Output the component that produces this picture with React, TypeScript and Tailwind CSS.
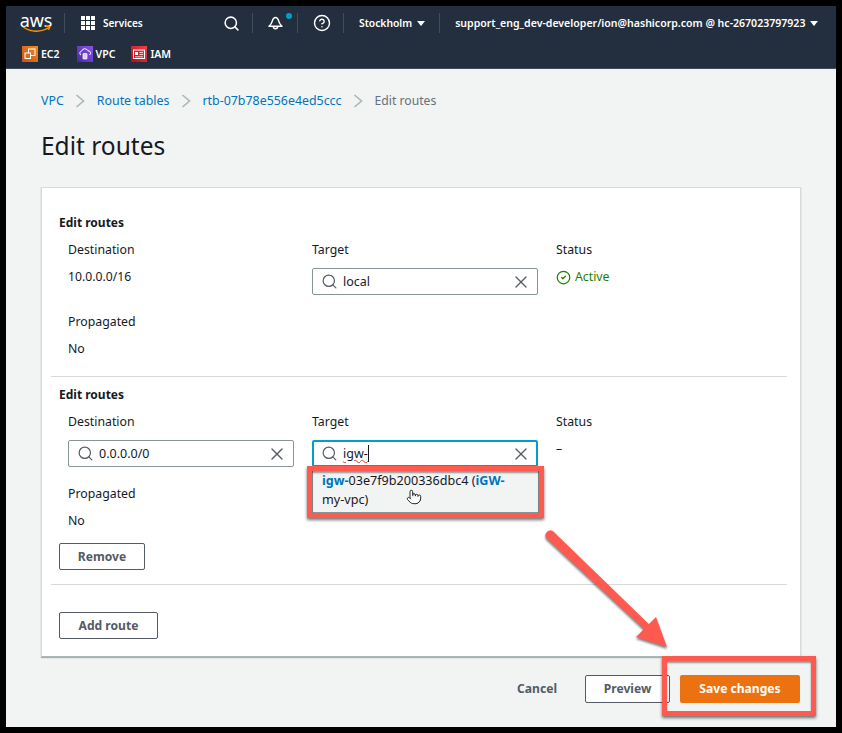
import { CircleCheck, CircleHelp, Pointer, Search, X } from 'lucide-react';

function Caret() {
    return <span className="inline-block w-0 h-0 border-l-[4px] border-r-[4px] border-t-[5px] border-l-transparent border-r-transparent border-t-white" />;
}

function NavDivider() {
    return <span className="block w-px h-[20px] bg-[#414d5c]" />;
}

function Ec2Icon() {
    return (
        <svg width="16" height="16" viewBox="0 0 16 16" className="shrink-0">
            <defs>
                <linearGradient id="ec2" x1="0" y1="1" x2="1" y2="0">
                    <stop offset="0" stopColor="#c8511b" />
                    <stop offset="1" stopColor="#f08a1d" />
                </linearGradient>
            </defs>
            <rect width="16" height="16" fill="url(#ec2)" />
            <rect x="6.5" y="3" width="6.5" height="6.5" fill="none" stroke="#fff" strokeWidth="1" />
            <rect x="3" y="7" width="5.5" height="5.5" fill="#dc6b18" stroke="#fff" strokeWidth="1" />
        </svg>
    );
}

function VpcIcon() {
    return (
        <svg width="16" height="16" viewBox="0 0 16 16" className="shrink-0">
            <defs>
                <linearGradient id="vpc" x1="0" y1="1" x2="1" y2="0">
                    <stop offset="0" stopColor="#4d27a8" />
                    <stop offset="1" stopColor="#8a55e8" />
                </linearGradient>
            </defs>
            <rect width="16" height="16" fill="url(#vpc)" />
            <path d="M4 9a2 2 0 0 1 .5-3.8A3.5 3.5 0 0 1 11 4.8 2.3 2.3 0 0 1 12.5 9" fill="none" stroke="#fff" strokeWidth="1" />
            <rect x="6" y="7.5" width="4" height="5.5" rx="0.5" fill="#d9cdf5" stroke="#fff" strokeWidth="0.7" />
        </svg>
    );
}

function IamIcon() {
    return (
        <svg width="16" height="16" viewBox="0 0 16 16" className="shrink-0">
            <defs>
                <linearGradient id="iam" x1="0" y1="1" x2="1" y2="0">
                    <stop offset="0" stopColor="#bd0816" />
                    <stop offset="1" stopColor="#f0404a" />
                </linearGradient>
            </defs>
            <rect width="16" height="16" fill="url(#iam)" />
            <rect x="2.5" y="4" width="11" height="8.5" fill="none" stroke="#fff" strokeWidth="1" />
            <rect x="4" y="6" width="3" height="3" fill="#fff" />
            <path d="M8.5 6.5h3.5M8.5 8.5h3.5M4 10.8h8" stroke="#fff" strokeWidth="0.8" />
        </svg>
    );
}

function Crumb({ children }: { children: string }) {
    return <a className="text-[#0073bb]">{children}</a>;
}

function CrumbSep() {
    return (
        <svg width="10" height="14" viewBox="0 0 10 14" className="mx-[11.5px] shrink-0">
            <path d="M1.5 1l7 6-7 6" fill="none" stroke="#aab7b8" strokeWidth="1.6" />
        </svg>
    );
}

function TextInput({ value, focused }: { value: React.ReactNode; focused?: boolean }) {
    return (
        <div className={'w-[226px] h-[27px] flex items-center bg-white rounded-[2px] ' + (focused ? 'border-2 border-[#00a1c9] pl-[7px] pr-[5px]' : 'border border-[#879596] pl-[8px] pr-[6px]')}>
            <Search size={17} strokeWidth={1.7} className="text-[#545b64] shrink-0" />
            <span className="ml-[5px] flex-1 text-[12.5px] text-[#16191f]">{value}</span>
            <X size={20} strokeWidth={1.6} className="text-[#545b64] shrink-0" />
        </div>
    );
}

function RouteButton({ children, width }: { children: string; width: string }) {
    return (
        <button className={'h-[27px] bg-white border border-[#545b64] rounded-[2px] text-[12.1px] font-bold text-[#545b64] ' + width}>
            {children}
        </button>
    );
}

export default function App() {
    return (
        <div className="relative w-[842px] h-[733px] bg-black p-[6px] overflow-hidden text-[12.3px] leading-[18px] text-[#16191f] font-['Noto_Sans','Open_Sans',sans-serif]">
            <div className="w-full h-full flex flex-col bg-[#f2f3f3]">
                <header className="h-[63px] shrink-0 bg-[#232f3e] border-b border-[#414d5c] text-white text-[10.5px] font-semibold">
                    <div className="h-[34px] flex items-center pl-[15px]">
                        <div className="w-[30px] flex flex-col items-center">
                            <span className="text-[18px] leading-[13px] font-normal tracking-[-0.2px]">aws</span>
                            <svg width="29" height="7" viewBox="0 0 29 7" className="-mt-[1px]">
                                <path d="M1 1c8 5.5 18 5.5 26 0.5" fill="none" stroke="#ff9900" strokeWidth="1.4" />
                                <path d="M24 0.5l4 0-1.5 3.5" fill="none" stroke="#ff9900" strokeWidth="1.2" />
                            </svg>
                        </div>
                        <span className="ml-[13px]"><NavDivider /></span>
                        <div className="ml-[16px] grid grid-cols-3 gap-[1px]">
                            {Array.from({ length: 9 }).map((_, i) => <span key={i} className="w-[4px] h-[4px] bg-white" />)}
                        </div>
                        <span className="ml-[8px] w-[119.5px] text-[10px]">Services</span>
                        <Search size={17} strokeWidth={2.2} />
                        <span className="ml-[12.5px]"><NavDivider /></span>
                        <div className="relative ml-[15px]">
                            <svg width="15" height="14" viewBox="0 0 15 14" className="block">
                                <path d="M7.5 1.5C5.2 1.5 4.6 3.6 4.1 5.6C3.6 7.6 2.4 9 1 10.2H14C12.6 9 11.4 7.6 10.9 5.6C10.4 3.6 9.8 1.5 7.5 1.5Z" fill="none" stroke="#fff" strokeWidth="1.5" strokeLinejoin="round" />
                                <path d="M5.4 10.6a2.1 2.1 0 0 0 4.2 0" fill="none" stroke="#fff" strokeWidth="1.5" />
                            </svg>
                            <span className="absolute -top-[3px] left-[18px] w-[6px] h-[6px] rounded-full bg-[#00a1c9]" />
                        </div>
                        <span className="ml-[14px]"><NavDivider /></span>
                        <CircleHelp size={18} strokeWidth={1.9} className="ml-[14.5px]" />
                        <span className="ml-[12.5px]"><NavDivider /></span>
                        <span className="ml-[15px] text-[10.3px]">Stockholm</span>
                        <span className="ml-[5px] flex"><Caret /></span>
                        <span className="ml-[14px]"><NavDivider /></span>
                        <span className="ml-[15px] text-[10.55px] whitespace-nowrap">support_eng_dev-developer/ion@hashicorp.com @ hc-267023797923</span>
                        <span className="ml-[5px] flex"><Caret /></span>
                    </div>
                    <div className="h-[28px] flex items-center pl-[16px]">
                        <span className="flex items-center gap-[3px]"><Ec2Icon />EC2</span>
                        <span className="ml-[17px] flex items-center gap-[3px]"><VpcIcon />VPC</span>
                        <span className="ml-[16px] flex items-center gap-[3px]"><IamIcon />IAM</span>
                    </div>
                </header>

                <main className="flex-1 flex flex-col px-[35px]">
                    <nav className="mt-[23px] h-[18px] flex items-center text-[12.4px]">
                        <Crumb>VPC</Crumb>
                        <CrumbSep />
                        <Crumb>Route tables</Crumb>
                        <CrumbSep />
                        <Crumb>rtb-07b78e556e4ed5ccc</Crumb>
                        <CrumbSep />
                        <span className="text-[#687078] text-[12.2px]">Edit routes</span>
                    </nav>
                    <h1 className="mt-[19px] text-[24.5px] leading-[34px] font-normal">Edit routes</h1>

                    <section className="mt-[24px] h-[470px] w-[760px] bg-white border border-[#d5dbdb] border-b-[#aab7b8] shadow-[0_1px_1px_rgba(0,28,36,0.3)] pt-[26px] pl-[9px] pr-[13px]">
                        <div className="h-[163px] border-b border-[#d5dbdb]">
                            <h2 className="pl-[8px] font-bold text-[12px]">Edit routes</h2>
                            <div className="mt-[9px] pl-[17px] grid grid-cols-[244px_244px_auto]">
                                <div>
                                    <div>Destination</div>
                                    <div className="mt-[9px] text-[12.2px]">10.0.0.0/16</div>
                                    <div className="mt-[27px]">Propagated</div>
                                    <div className="mt-[9px]">No</div>
                                </div>
                                <div>
                                    <div>Target</div>
                                    <div className="mt-[9px]"><TextInput value="local" /></div>
                                </div>
                                <div>
                                    <div>Status</div>
                                    <div className="mt-[9px] flex items-center gap-[4px] text-[#1d8102]">
                                        <CircleCheck size={15} strokeWidth={2} />
                                        Active
                                    </div>
                                </div>
                            </div>
                        </div>

                        <div className="h-[208px] border-b border-[#d5dbdb] pt-[9px]">
                            <h2 className="pl-[8px] font-bold text-[12px]">Edit routes</h2>
                            <div className="mt-[9px] pl-[17px] grid grid-cols-[244px_244px_auto]">
                                <div>
                                    <div>Destination</div>
                                    <div className="mt-[9px]"><TextInput value="0.0.0.0/0" /></div>
                                    <div className="mt-[18px]">Propagated</div>
                                    <div className="mt-[9px]">No</div>
                                </div>
                                <div>
                                    <div>Target</div>
                                    <div className="mt-[9px]">
                                        <TextInput focused value={<span className="underline decoration-wavy decoration-[#e0392b] decoration-1 border-r border-[#16191f]">igw-</span>} />
                                    </div>
                                </div>
                                <div>
                                    <div>Status</div>
                                    <div className="mt-[9px]">–</div>
                                </div>
                            </div>
                            <div className="mt-[13px] pl-[8px]"><RouteButton width="w-[86px]">Remove</RouteButton></div>
                        </div>

                        <div className="mt-[27px] pl-[8px]"><RouteButton width="w-[99px]">Add route</RouteButton></div>
                    </section>

                    <div className="mt-[18px] flex items-center w-[759px]">
                        <span className="ml-auto text-[12.1px] font-bold text-[#545b64]">Cancel</span>
                        <button className="ml-[28px] w-[85px] h-[28px] bg-white border border-[#545b64] rounded-[2px] text-[12.1px] font-bold text-[#545b64]">Preview</button>
                        <button className="ml-[10px] w-[120px] h-[28px] bg-[#ec7211] rounded-[2px] text-[12.1px] font-bold text-white">Save changes</button>
                    </div>
                </main>
            </div>

            {/* dropdown suggestion, outlined by the red callout */}
            <div className="absolute left-[312px] top-[470px] w-[227px] h-[43px] bg-[#f2f3f3] border border-[#879596] px-[9px] text-[12.6px] leading-[19px] text-[#16191f]">
                <b className="font-bold text-[#0073bb]">igw-</b>03e7f9b200336dbc4 (<b className="font-bold text-[#0073bb]">iGW-</b>
                <br />my-vpc)
            </div>
            <Pointer size={16} strokeWidth={1.4} fill="#fff" className="absolute left-[406px] top-[489px] text-[#16191f]" />
            <div className="absolute left-[307px] top-[466px] w-[237px] h-[52px] border-[5px] border-[#ff5a4f] shadow-[0_2px_3px_rgba(0,0,0,0.55),inset_0_2px_2px_rgba(0,0,0,0.4)]" />
            <div className="absolute left-[662px] top-[656px] w-[154px] h-[60px] border-[5px] border-[#ff5a4f] shadow-[0_2px_3px_rgba(0,0,0,0.55),inset_0_2px_2px_rgba(0,0,0,0.4)]" />

            {/* callout arrow */}
            <svg className="absolute left-[530px] top-[520px] drop-shadow-[0_2px_1px_rgba(0,0,0,0.5)]" width="150" height="140" viewBox="530 520 150 140">
                <path d="M553.4 531.4L650.4 625.5L645.6 630.5L546.6 538.6A5 5 0 0 1 553.4 531.4Z" fill="#ff5a4f" />
                <path d="M667 647L656 617L636 637Z" fill="#ff5a4f" />
            </svg>
        </div>
    );
}
